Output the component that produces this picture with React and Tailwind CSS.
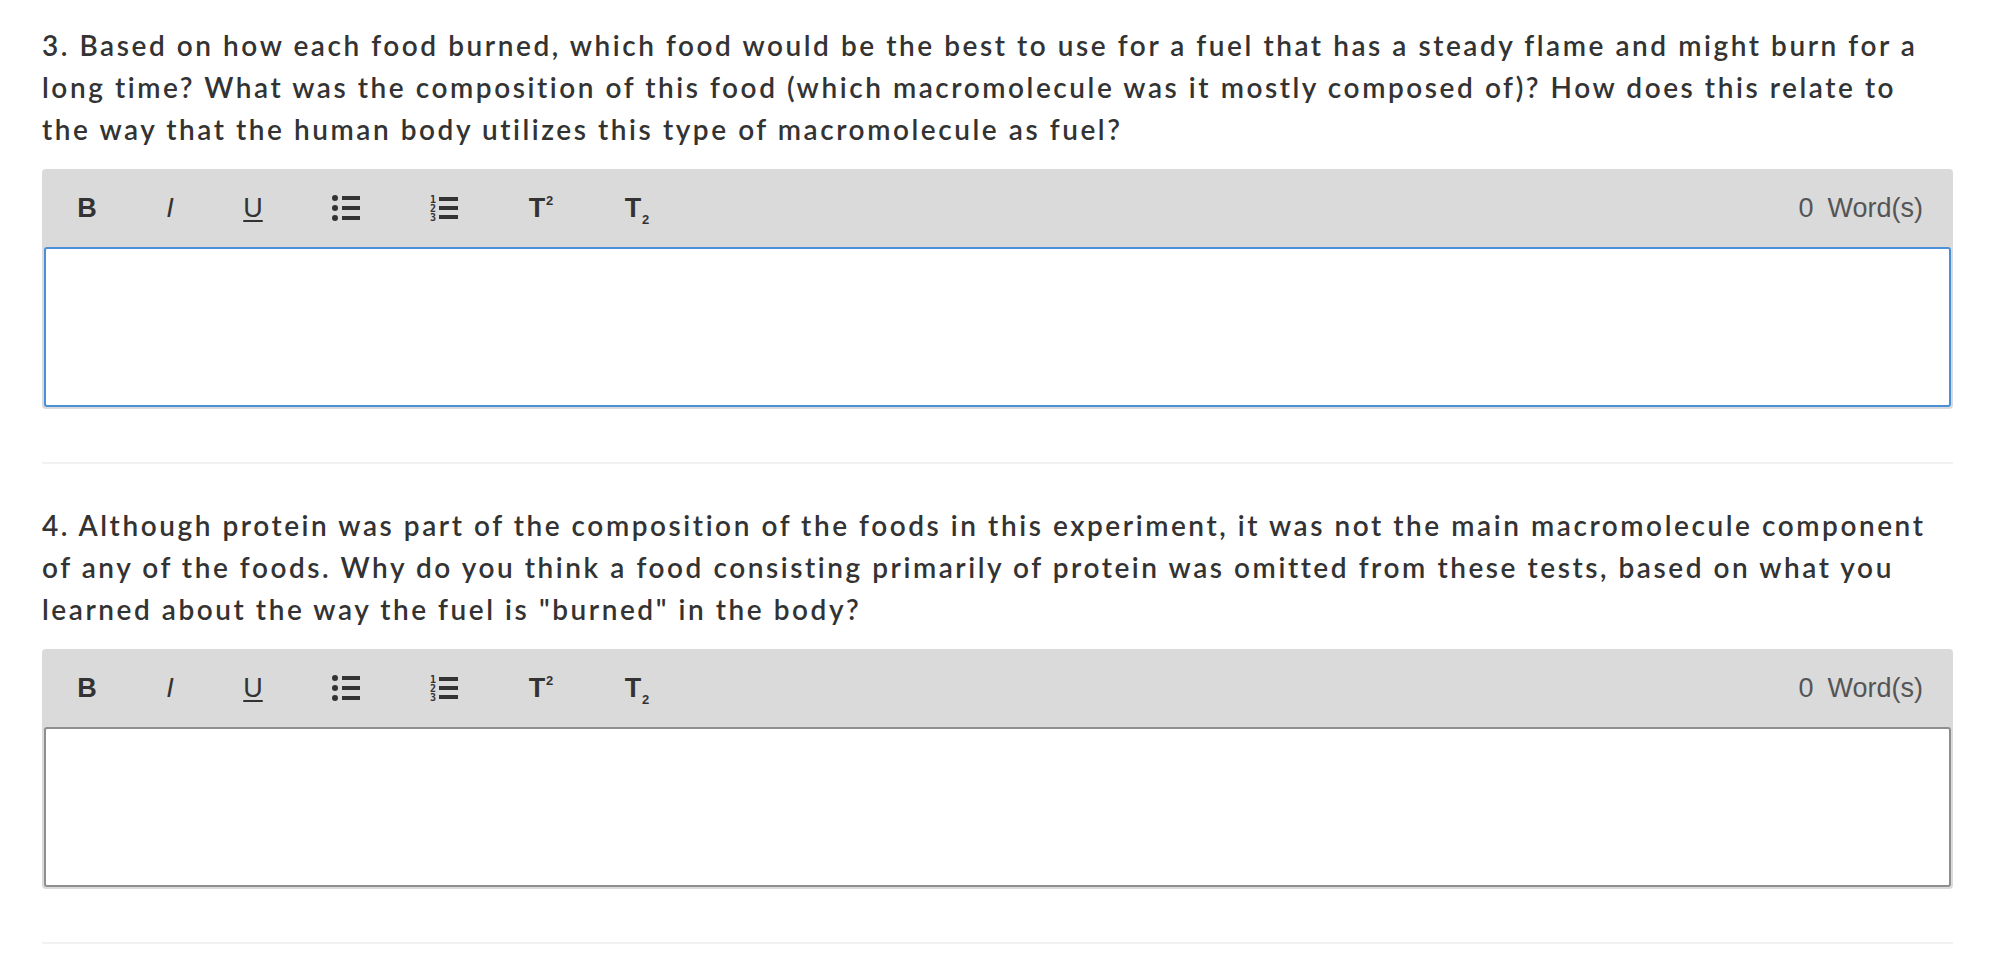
import React from 'react';

const questions = [
  {
    id: 3,
    text: '3. Based on how each food burned, which food would be the best to use for a fuel that has a steady flame and might burn for a long time? What was the composition of this food (which macromolecule was it mostly composed of)? How does this relate to the way that the human body utilizes this type of macromolecule as fuel?',
    focused: true,
  },
  {
    id: 4,
    text: '4. Although protein was part of the composition of the foods in this experiment, it was not the main macromolecule component of any of the foods. Why do you think a food consisting primarily of protein was omitted from these tests, based on what you learned about the way the fuel is "burned" in the body?',
    focused: false,
  },
];

const BulletIcon = () => (
  <svg width="28" height="26" viewBox="0 0 28 26" fill="#333">
    <circle cx="3" cy="3" r="3" />
    <circle cx="3" cy="13" r="3" />
    <circle cx="3" cy="23" r="3" />
    <rect x="10" y="1" width="18" height="4" />
    <rect x="10" y="11" width="18" height="4" />
    <rect x="10" y="21" width="18" height="4" />
  </svg>
);

const NumberedIcon = () => (
  <svg width="28" height="26" viewBox="0 0 28 26" fill="#333">
    <text x="0" y="7.5" fontSize="10" fontWeight="700" fontFamily="'DejaVu Sans Mono', monospace">1</text>
    <text x="0" y="16.5" fontSize="10" fontWeight="700" fontFamily="'DejaVu Sans Mono', monospace">2</text>
    <text x="0" y="25.5" fontSize="10" fontWeight="700" fontFamily="'DejaVu Sans Mono', monospace">3</text>
    <rect x="9" y="2" width="19" height="4" />
    <rect x="9" y="11" width="19" height="4" />
    <rect x="9" y="20" width="19" height="4" />
  </svg>
);

const Toolbar = () => (
  <div className="h-[78px] flex items-center pr-[28px] text-[#333] font-['Liberation_Sans',Arial,sans-serif]">
    {/* bold */}
    <span className="ml-[28px] w-[30px] text-center text-[27px] font-bold leading-none">B</span>
    {/* italic */}
    <span className="ml-[53px] w-[30px] text-center text-[27px] italic leading-none">I</span>
    {/* underline */}
    <span className="ml-[53px] w-[30px] text-center text-[27px] leading-none underline underline-offset-[3px] decoration-[1.5px]">U</span>
    <span className="ml-[63px] w-[30px] flex justify-center"><BulletIcon /></span>
    <span className="ml-[68px] w-[30px] flex justify-center"><NumberedIcon /></span>
    {/* superscript */}
    <span className="ml-[67px] w-[30px] flex justify-center">
      <span className="relative text-[27px] font-bold leading-none pr-[8px]">
        T
        <span className="absolute right-0 top-[-1px] text-[13px] font-bold leading-none">2</span>
      </span>
    </span>
    {/* subscript */}
    <span className="ml-[66px] w-[30px] flex justify-center">
      <span className="relative text-[27px] font-bold leading-none pr-[8px]">
        T
        <span className="absolute right-0 bottom-[-4px] text-[13px] font-bold leading-none">2</span>
      </span>
    </span>
    <div className="ml-auto flex items-center gap-[14px] text-[27px] text-[#555]">
      <span>0</span>
      <span>Word(s)</span>
    </div>
  </div>
);

const Question = ({ q, first }) => (
  <div className={first ? '' : 'pt-[40px]'}>
    <p className="max-w-[1898px] text-[28px] leading-[42px] font-semibold tracking-[2.55px] text-[#333] font-['Lato',sans-serif]">
      {q.text}
    </p>
    <div className="mt-[19px] rounded-[4px] bg-[#dadada] px-[2px] pb-[2px]">
      <Toolbar />
      <div
        className={`h-[160px] bg-white rounded-[3px] border-2 ${
          q.focused ? 'border-[#4a90d9]' : 'border-[#8f8f8f]'
        }`}
      />
    </div>
    <div className="mt-[53px] h-[2px] bg-[#f2f2f2]" />
  </div>
);

export default function App() {
  return (
    <div className="min-h-screen bg-white pl-[42px] pr-[49px] pt-[24px]">
      {questions.map((q, i) => (
        <Question key={q.id} q={q} first={i === 0} />
      ))}
    </div>
  );
}
